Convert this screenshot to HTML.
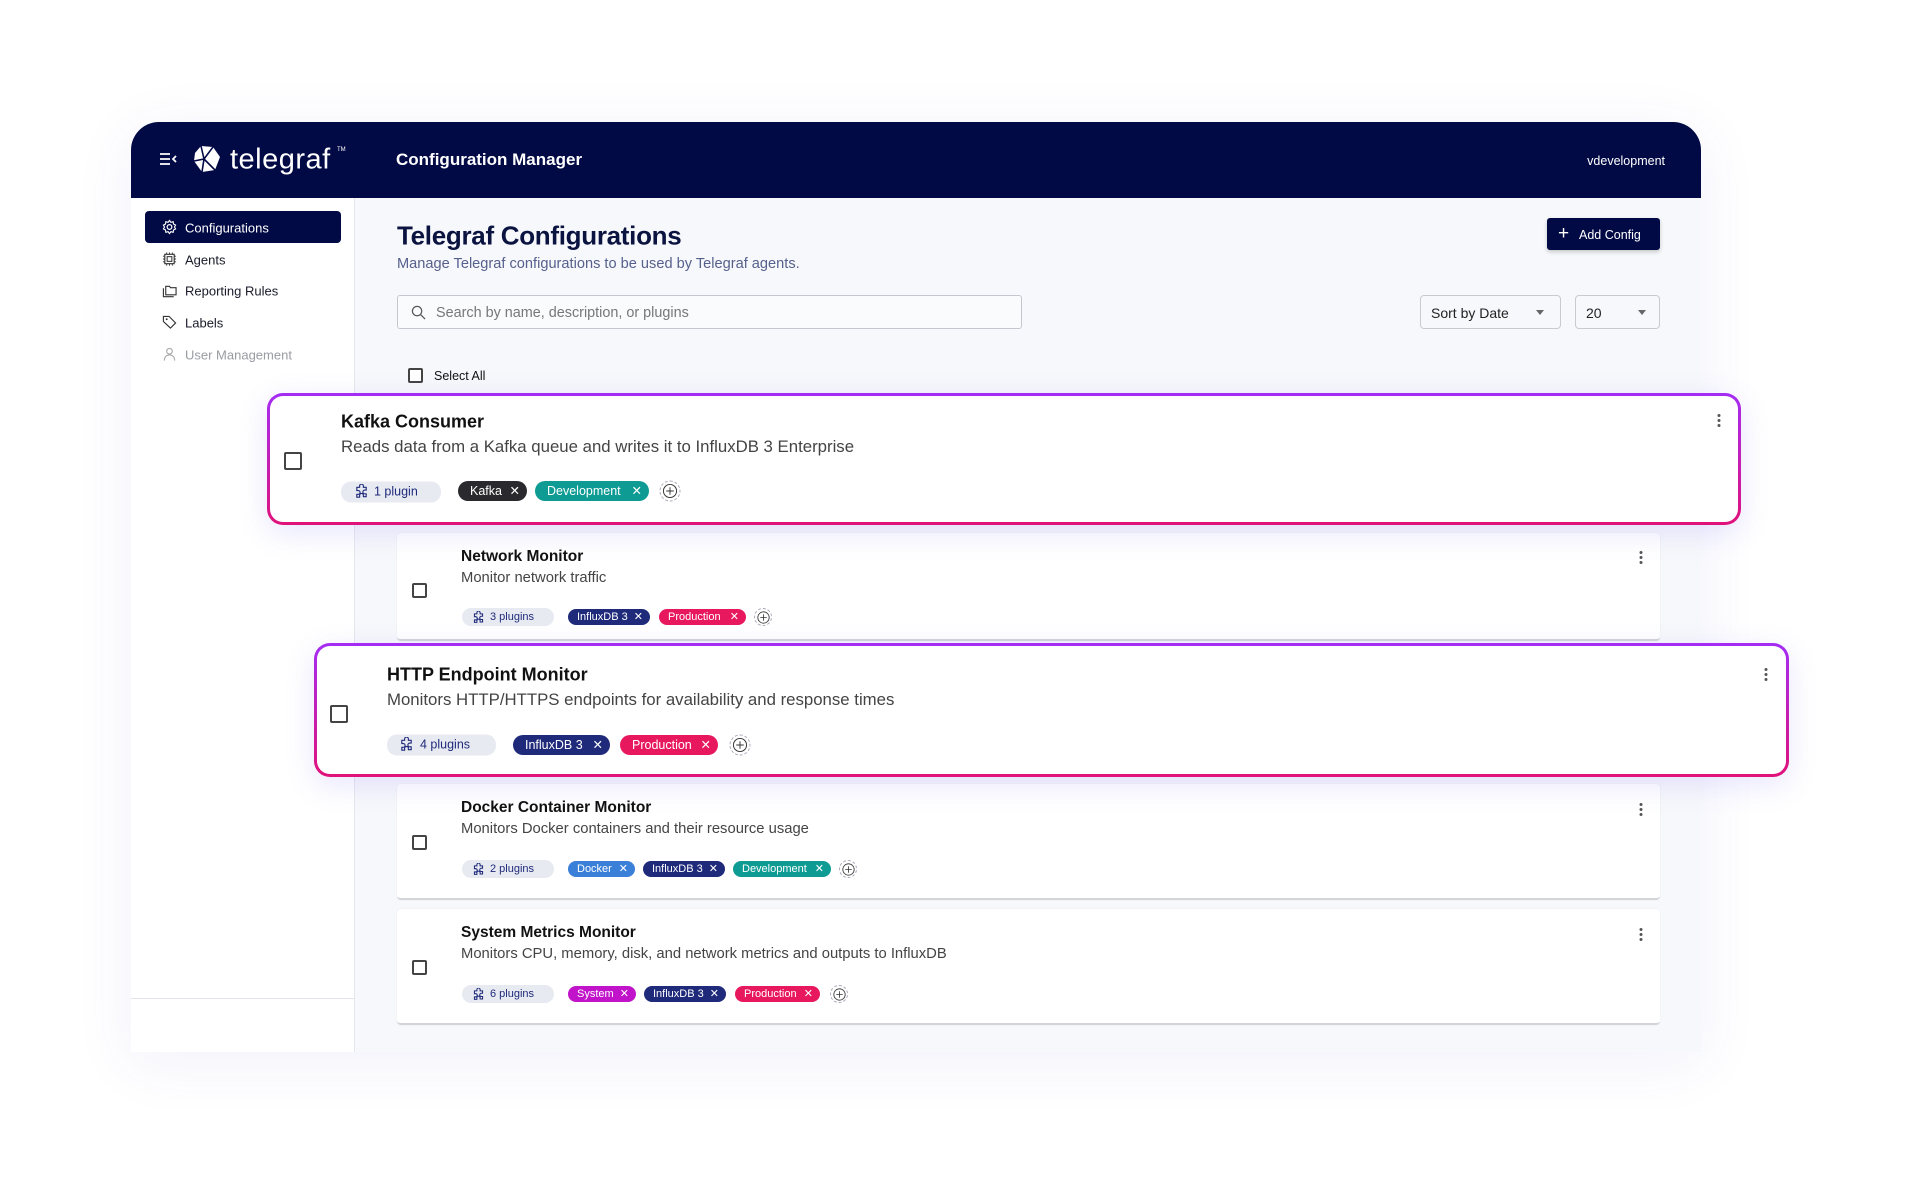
<!DOCTYPE html>
<html><head><meta charset="utf-8"><style>
*{box-sizing:border-box;margin:0;padding:0}
body{width:1919px;height:1192px;background:#fff;font-family:"Liberation Sans",sans-serif;position:relative;overflow:hidden}
.abs{position:absolute}
.app{left:131px;top:122px;width:1570px;height:930px;border-radius:28px 28px 0 0;box-shadow:0 10px 60px rgba(80,80,200,0.08);background:#f7f8fb}
.hdr{left:131px;top:122px;width:1570px;height:76px;background:#020a45;border-radius:28px 28px 0 0}
.side{left:131px;top:198px;width:224px;height:854px;background:#fff;border-right:1px solid #e6e8ee}
.nav{position:absolute;left:185px;font-size:13px;color:#1a1a2a;transform:translateY(-50%)}
.navi{position:absolute;left:162px;transform:translateY(-50%)}
.card{position:absolute;background:#fff;border-radius:4px;border-bottom:2px solid #d2d4da;box-shadow:0 0 2px rgba(0,0,0,0.06)}
.hl{position:absolute;border:3px solid transparent;border-radius:16px;background:linear-gradient(#fff,#fff) padding-box,linear-gradient(180deg,#a52cf5,#e0127a) border-box;box-shadow:0 8px 30px rgba(100,90,240,0.15)}
.cb{position:absolute;border:2px solid #444;border-radius:2px;background:#fff}
.t{position:absolute;white-space:nowrap;transform:translateY(-50%)}
.tag{position:absolute;height:16px;border-radius:8px;color:#fff;font-size:11px;line-height:16px;padding-left:9px;transform:translateY(-50%);white-space:nowrap}
.tag b{position:absolute;right:7px;font-weight:normal}
.pill{position:absolute;border-radius:10px;background:#e8eaf2;color:#1f2a7a;transform:translateY(-50%);white-space:nowrap}
.plus{position:absolute;border:1px dashed #aab;border-radius:50%;transform:translate(-50%,-50%);display:flex;align-items:center;justify-content:center}
.keb{position:absolute;width:3px;transform:translateX(-50%)}
.keb i{display:block;width:3px;height:3px;border-radius:50%;background:#555;margin-bottom:2px}
</style></head><body>
<div class="abs app"></div>
<div class="abs hdr"></div>
<svg class="abs" style="left:159px;top:152px" width="18" height="14" viewBox="0 0 18 14"><path d="M1 2h10M1 7h10M1 12h10M17 4l-3 3 3 3" stroke="#fff" stroke-width="1.8" fill="none"/></svg>
<svg class="abs" style="left:192px;top:145px" width="29" height="28" viewBox="0 0 29 28"><path d="M9 1L21 2L28 12L23 25L10 27L2 16L3 8Z" fill="#fff"/><path d="M9 1L12 14L2 16M12 14L23 25M12 14L21 2M12 14L10 27" stroke="#020a45" stroke-width="1.6" fill="none"/></svg>
<div class="t" style="left:230px;top:160px;color:#fff;font-size:29px;letter-spacing:0.5px">telegraf</div>
<div class="t" style="left:337px;top:150px;color:#fff;font-size:6px">TM</div>
<div class="t" style="left:396px;top:160px;color:#fff;font-size:17px;font-weight:bold">Configuration Manager</div>
<div class="t" style="right:254px;top:161px;color:#fff;font-size:12.5px">vdevelopment</div>

<div class="abs side"></div>
<div class="abs" style="left:131px;top:998px;width:224px;height:1px;background:#e3e5ea"></div>
<div class="abs" style="left:145px;top:211px;width:196px;height:32px;background:#020a45;border-radius:4px"></div>
<svg class="navi" style="top:227px" width="15" height="15" viewBox="0 0 16 16"><circle cx="8" cy="8" r="2.5" stroke="#fff" stroke-width="1.3" fill="none"/><path d="M8 1l1.5 2 2.4-.6.4 2.4 2.2 1.2-1.2 2 1.2 2-2.2 1.2-.4 2.4-2.4-.6L8 15l-1.5-2-2.4.6-.4-2.4L1.5 10l1.2-2-1.2-2 2.2-1.2.4-2.4 2.4.6z" stroke="#fff" stroke-width="1.2" fill="none"/></svg>
<div class="nav" style="top:228px;color:#fff">Configurations</div>
<svg class="navi" style="top:259px" width="15" height="15" viewBox="0 0 16 16"><rect x="3" y="3" width="10" height="10" stroke="#333" stroke-width="1.2" fill="none"/><rect x="5.5" y="5.5" width="5" height="5" stroke="#333" stroke-width="1.1" fill="none"/><path d="M1 5h2M1 8h2M1 11h2M13 5h2M13 8h2M13 11h2M5 1v2M8 1v2M11 1v2M5 13v2M8 13v2M11 13v2" stroke="#333"/></svg>
<div class="nav" style="top:260px">Agents</div>
<svg class="navi" style="top:291px" width="15" height="15" viewBox="0 0 16 16"><path d="M4 3h4l1 1.5h6V12H4z" stroke="#333" stroke-width="1.2" fill="none"/><path d="M1.5 5v9h11" stroke="#333" stroke-width="1.2" fill="none"/></svg>
<div class="nav" style="top:291px">Reporting Rules</div>
<svg class="navi" style="top:322px" width="15" height="15" viewBox="0 0 16 16"><path d="M1.5 2.5v5l7.5 7 5.5-5.5-7-7h-6z" stroke="#333" stroke-width="1.2" fill="none"/><circle cx="5" cy="5" r="1" fill="#333"/></svg>
<div class="nav" style="top:323px">Labels</div>
<svg class="navi" style="top:354px" width="15" height="15" viewBox="0 0 16 16"><circle cx="8" cy="5" r="3" stroke="#aaa" stroke-width="1.2" fill="none"/><path d="M2.5 15c0-4 2.5-6 5.5-6s5.5 2 5.5 6" stroke="#aaa" stroke-width="1.2" fill="none"/></svg>
<div class="nav" style="top:355px;color:#9a9ca4">User Management</div>

<div class="t" style="left:397px;top:236px;font-size:26px;font-weight:bold;color:#0b1340;letter-spacing:-0.3px">Telegraf Configurations</div>
<div class="t" style="left:397px;top:264px;font-size:14.6px;color:#56608c">Manage Telegraf configurations to be used by Telegraf agents.</div>
<div class="abs" style="left:1547px;top:218px;width:113px;height:32px;background:#020a45;border-radius:3px;box-shadow:0 2px 4px rgba(0,0,0,0.2)"></div>
<div class="t" style="left:1558px;top:234px;color:#fff;font-size:19px">+</div>
<div class="t" style="left:1579px;top:235px;color:#fff;font-size:12.5px">Add Config</div>

<div class="abs" style="left:397px;top:295px;width:625px;height:34px;border:1px solid #c4c7cf;border-radius:3px;background:#fafbfc"></div>
<svg class="abs" style="left:411px;top:305px" width="15" height="15" viewBox="0 0 16 16"><circle cx="6.5" cy="6.5" r="5" stroke="#555" stroke-width="1.3" fill="none"/><path d="M10.5 10.5L15 15" stroke="#555" stroke-width="1.3"/></svg>
<div class="t" style="left:436px;top:313px;font-size:14.4px;color:#777">Search by name, description, or plugins</div>
<div class="abs" style="left:1420px;top:295px;width:141px;height:34px;border:1px solid #c8cad0;border-radius:4px"></div>
<div class="t" style="left:1431px;top:313px;font-size:14px;color:#222">Sort by Date</div>
<div class="abs" style="left:1536px;top:310px;border:4px solid transparent;border-top:5px solid #666"></div>
<div class="abs" style="left:1575px;top:295px;width:85px;height:34px;border:1px solid #c8cad0;border-radius:4px"></div>
<div class="t" style="left:1586px;top:313px;font-size:14px;color:#222">20</div>
<div class="abs" style="left:1638px;top:310px;border:4px solid transparent;border-top:5px solid #666"></div>

<div class="cb" style="left:408px;top:368px;width:15px;height:15px"></div>
<div class="t" style="left:434px;top:376px;font-size:12.5px;color:#111">Select All</div>

<div class="card" style="left:397px;top:533px;width:1263px;height:108px"></div>
<div class="card" style="left:397px;top:784px;width:1263px;height:116px"></div>
<div class="card" style="left:397px;top:909px;width:1263px;height:116px"></div>

<div class="hl" style="left:267px;top:393px;width:1474px;height:132px"></div>
<div class="hl" style="left:314px;top:643px;width:1475px;height:134px"></div>

<!-- Kafka -->
<div class="cb" style="left:284px;top:452px;width:18px;height:18px"></div>
<div class="t" style="left:341px;top:422px;font-size:18px;font-weight:bold;color:#111">Kafka Consumer</div>
<div class="t" style="left:341px;top:447px;font-size:16.8px;color:#444">Reads data from a Kafka queue and writes it to InfluxDB 3 Enterprise</div>
<div class="pill" style="left:341px;top:492px;width:100px;height:21px;font-size:12.5px;line-height:21px;padding-left:33px">1 plugin</div>
<svg class="abs" style="left:354px;top:484px" width="15" height="15" viewBox="0 0 16 16"><path d="M6 2a2 2 0 0 1 4 0v1.5h3v3h-1.5a2 2 0 0 0 0 4H13v3H10v-1.5a2 2 0 0 0-4 0V14H3v-3h1.5a2 2 0 0 0 0-4H3V3.5h3z" stroke="#1f2a7a" stroke-width="1.2" fill="none"/></svg>
<div class="tag" style="left:458px;top:491px;width:69px;height:20px;line-height:20px;border-radius:10px;font-size:12.5px;background:#2a2a2e;padding-left:12px">Kafka<b>✕</b></div>
<div class="tag" style="left:535px;top:491px;width:114px;height:20px;line-height:20px;border-radius:10px;font-size:12.5px;background:#0e9b94;padding-left:12px">Development<b>✕</b></div>
<div class="plus" style="left:670px;top:491px;width:21px;height:21px"><svg width="15" height="15" viewBox="0 0 16 16"><circle cx="8" cy="8" r="7" stroke="#333" fill="none"/><path d="M8 4v8M4 8h8" stroke="#333"/></svg></div>
<div class="keb" style="left:1719px;top:414px"><i></i><i></i><i></i></div>

<!-- Network -->
<div class="cb" style="left:412px;top:583px;width:15px;height:15px"></div>
<div class="t" style="left:461px;top:557px;font-size:15.5px;font-weight:bold;color:#111">Network Monitor</div>
<div class="t" style="left:461px;top:578px;font-size:14.8px;color:#444">Monitor network traffic</div>
<div class="pill" style="left:462px;top:617px;width:92px;height:18px;font-size:11px;line-height:18px;padding-left:28px">3 plugins</div>
<svg class="abs" style="left:472px;top:611px" width="13" height="13" viewBox="0 0 16 16"><path d="M6 2a2 2 0 0 1 4 0v1.5h3v3h-1.5a2 2 0 0 0 0 4H13v3H10v-1.5a2 2 0 0 0-4 0V14H3v-3h1.5a2 2 0 0 0 0-4H3V3.5h3z" stroke="#1f2a7a" stroke-width="1.3" fill="none"/></svg>
<div class="tag" style="left:568px;top:617px;width:82px;background:#1f2a7a">InfluxDB 3<b>✕</b></div>
<div class="tag" style="left:659px;top:617px;width:87px;background:#e8185f">Production<b>✕</b></div>
<div class="plus" style="left:763px;top:617px;width:18px;height:18px"><svg width="13" height="13" viewBox="0 0 16 16"><circle cx="8" cy="8" r="7" stroke="#333" fill="none"/><path d="M8 4v8M4 8h8" stroke="#333"/></svg></div>
<div class="keb" style="left:1641px;top:551px"><i></i><i></i><i></i></div>

<!-- HTTP -->
<div class="cb" style="left:330px;top:705px;width:18px;height:18px"></div>
<div class="t" style="left:387px;top:675px;font-size:18px;font-weight:bold;color:#111">HTTP Endpoint Monitor</div>
<div class="t" style="left:387px;top:700px;font-size:16.8px;color:#444">Monitors HTTP/HTTPS endpoints for availability and response times</div>
<div class="pill" style="left:387px;top:745px;width:109px;height:21px;font-size:12.5px;line-height:21px;padding-left:33px">4 plugins</div>
<svg class="abs" style="left:399px;top:737px" width="15" height="15" viewBox="0 0 16 16"><path d="M6 2a2 2 0 0 1 4 0v1.5h3v3h-1.5a2 2 0 0 0 0 4H13v3H10v-1.5a2 2 0 0 0-4 0V14H3v-3h1.5a2 2 0 0 0 0-4H3V3.5h3z" stroke="#1f2a7a" stroke-width="1.2" fill="none"/></svg>
<div class="tag" style="left:513px;top:745px;width:97px;height:20px;line-height:20px;border-radius:10px;font-size:12.5px;background:#1f2a7a;padding-left:12px">InfluxDB 3<b>✕</b></div>
<div class="tag" style="left:620px;top:745px;width:98px;height:20px;line-height:20px;border-radius:10px;font-size:12.5px;background:#e8185f;padding-left:12px">Production<b>✕</b></div>
<div class="plus" style="left:740px;top:745px;width:21px;height:21px"><svg width="15" height="15" viewBox="0 0 16 16"><circle cx="8" cy="8" r="7" stroke="#333" fill="none"/><path d="M8 4v8M4 8h8" stroke="#333"/></svg></div>
<div class="keb" style="left:1766px;top:668px"><i></i><i></i><i></i></div>

<!-- Docker -->
<div class="cb" style="left:412px;top:835px;width:15px;height:15px"></div>
<div class="t" style="left:461px;top:808px;font-size:15.5px;font-weight:bold;color:#111">Docker Container Monitor</div>
<div class="t" style="left:461px;top:829px;font-size:14.8px;color:#444">Monitors Docker containers and their resource usage</div>
<div class="pill" style="left:462px;top:869px;width:92px;height:18px;font-size:11px;line-height:18px;padding-left:28px">2 plugins</div>
<svg class="abs" style="left:472px;top:863px" width="13" height="13" viewBox="0 0 16 16"><path d="M6 2a2 2 0 0 1 4 0v1.5h3v3h-1.5a2 2 0 0 0 0 4H13v3H10v-1.5a2 2 0 0 0-4 0V14H3v-3h1.5a2 2 0 0 0 0-4H3V3.5h3z" stroke="#1f2a7a" stroke-width="1.3" fill="none"/></svg>
<div class="tag" style="left:568px;top:869px;width:67px;background:#3a7fd8">Docker<b>✕</b></div>
<div class="tag" style="left:643px;top:869px;width:82px;background:#1f2a7a">InfluxDB 3<b>✕</b></div>
<div class="tag" style="left:733px;top:869px;width:98px;background:#0e9b94">Development<b>✕</b></div>
<div class="plus" style="left:848px;top:869px;width:18px;height:18px"><svg width="13" height="13" viewBox="0 0 16 16"><circle cx="8" cy="8" r="7" stroke="#333" fill="none"/><path d="M8 4v8M4 8h8" stroke="#333"/></svg></div>
<div class="keb" style="left:1641px;top:803px"><i></i><i></i><i></i></div>

<!-- System -->
<div class="cb" style="left:412px;top:960px;width:15px;height:15px"></div>
<div class="t" style="left:461px;top:933px;font-size:15.5px;font-weight:bold;color:#111">System Metrics Monitor</div>
<div class="t" style="left:461px;top:954px;font-size:14.8px;color:#444">Monitors CPU, memory, disk, and network metrics and outputs to InfluxDB</div>
<div class="pill" style="left:462px;top:994px;width:92px;height:18px;font-size:11px;line-height:18px;padding-left:28px">6 plugins</div>
<svg class="abs" style="left:472px;top:988px" width="13" height="13" viewBox="0 0 16 16"><path d="M6 2a2 2 0 0 1 4 0v1.5h3v3h-1.5a2 2 0 0 0 0 4H13v3H10v-1.5a2 2 0 0 0-4 0V14H3v-3h1.5a2 2 0 0 0 0-4H3V3.5h3z" stroke="#1f2a7a" stroke-width="1.3" fill="none"/></svg>
<div class="tag" style="left:568px;top:994px;width:68px;background:#c113c9">System<b>✕</b></div>
<div class="tag" style="left:644px;top:994px;width:82px;background:#1f2a7a">InfluxDB 3<b>✕</b></div>
<div class="tag" style="left:735px;top:994px;width:85px;background:#e8185f">Production<b>✕</b></div>
<div class="plus" style="left:839px;top:994px;width:18px;height:18px"><svg width="13" height="13" viewBox="0 0 16 16"><circle cx="8" cy="8" r="7" stroke="#333" fill="none"/><path d="M8 4v8M4 8h8" stroke="#333"/></svg></div>
<div class="keb" style="left:1641px;top:928px"><i></i><i></i><i></i></div>
</body></html>
